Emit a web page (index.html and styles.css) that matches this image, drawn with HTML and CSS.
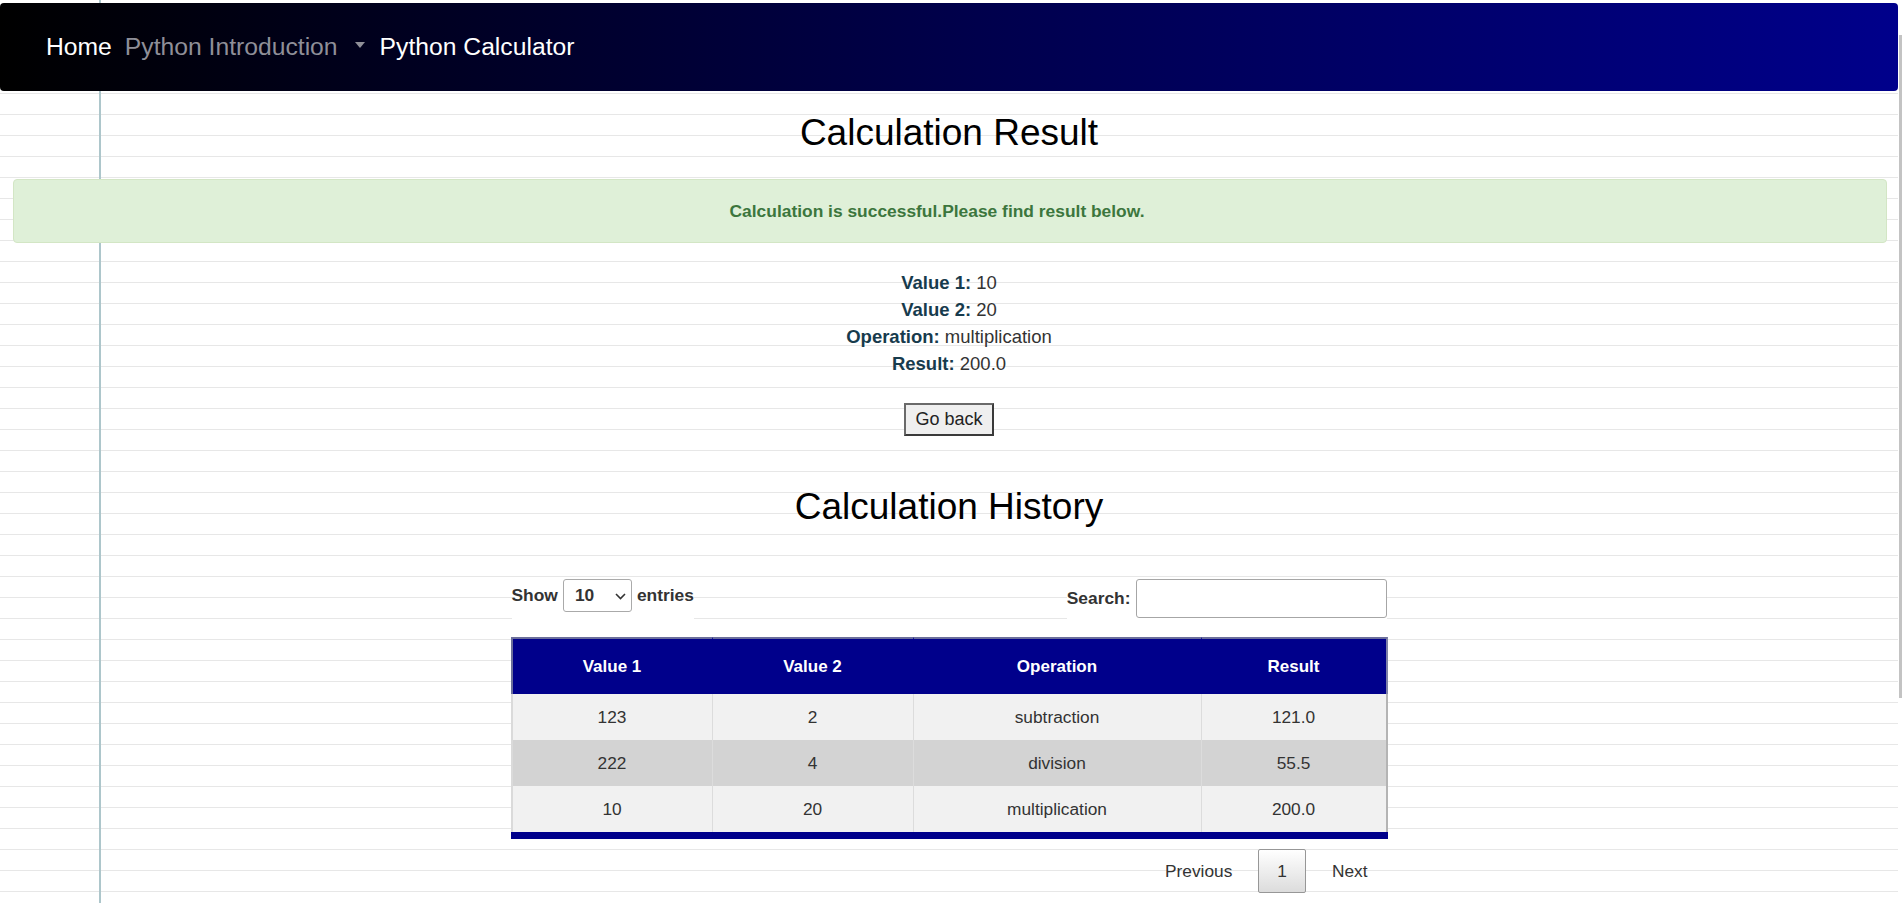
FILE: index.html
```html
<!DOCTYPE html>
<html lang="en">
<head>
<meta charset="utf-8">
<title>Python Calculator</title>
<link rel="stylesheet" href="styles.css">
</head>
<body>
<div class="page">
  <nav class="navbar">
    <a class="nav-link nav-home" href="#">Home</a>
    <span class="nav-dropdown"><a class="nav-link nav-muted" href="#">Python Introduction</a><span class="caret"></span></span>
    <a class="nav-link" href="#">Python Calculator</a>
  </nav>
  <main class="content">
    <h1 class="title">Calculation Result</h1>
    <div class="alert">Calculation is successful.Please find result below.</div>
    <div class="values">
      <div><strong>Value 1:</strong> 10</div>
      <div><strong>Value 2:</strong> 20</div>
      <div><strong>Operation:</strong> multiplication</div>
      <div><strong>Result:</strong> 200.0</div>
    </div>
    <div class="back-row"><button class="back-btn" type="button">Go back</button></div>
    <h1 class="title history-title">Calculation History</h1>
    <div class="dt-wrapper">
      <div class="dt-controls">
        <label class="dt-length"><span class="lbl">Show</span><span class="select-box"><span>10</span><svg class="chev" width="11" height="7" viewBox="0 0 11 7"><path d="M1 1 L5.5 5.5 L10 1" fill="none" stroke="#333" stroke-width="1.6"/></svg></span><span class="lbl">entries</span></label>
        <label class="dt-search"><span class="lbl-s">Search:</span><input class="search-input" type="search"></label>
      </div>
      <table class="dt-table">
        <colgroup><col class="c1"><col class="c2"><col class="c3"><col class="c4"></colgroup>
        <thead>
          <tr><th>Value 1</th><th>Value 2</th><th>Operation</th><th>Result</th></tr>
        </thead>
        <tbody>
          <tr class="odd"><td>123</td><td>2</td><td>subtraction</td><td>121.0</td></tr>
          <tr class="even"><td>222</td><td>4</td><td>division</td><td>55.5</td></tr>
          <tr class="odd"><td>10</td><td>20</td><td>multiplication</td><td>200.0</td></tr>
        </tbody>
      </table>
      <div class="pagination">
        <a class="page-btn" href="#">Previous</a>
        <a class="page-btn current" href="#">1</a>
        <a class="page-btn" href="#">Next</a>
      </div>
    </div>
  </main>
</div>
<div class="scrollbar"><div class="thumb"></div></div>
</body>
</html>
```

FILE: styles.css
```css
html, body {
  margin: 0;
  padding: 0;
}
body {
  height: 903px;
  overflow: hidden;
  display: flex;
  background: #fff;
  font-family: "Liberation Sans", Arial, sans-serif;
  color: #333;
}
*, *::before, *::after { box-sizing: border-box; }

.page {
  width: 1898px;
  flex: 0 0 1898px;
  height: 903px;
  overflow: hidden;
  background-color: #fff;
  background-image:
    linear-gradient(to right, transparent 99px, #adc6cb 99px, #adc6cb 101px, transparent 101px),
    repeating-linear-gradient(to bottom, transparent 0, transparent 9px, #e7e7e7 9px, #e7e7e7 10px, transparent 10px, transparent 21px);
}

.scrollbar {
  flex: 0 0 4px;
  width: 4px;
  background: #fff;
}
.thumb {
  margin-top: 35px;
  margin-left: 1px;
  width: 3px;
  height: 663px;
  background: #c3c3c3;
}

/* navbar */
.navbar {
  margin-top: 3px;
  height: 88px;
  border-radius: 4px;
  background: linear-gradient(to right, #000000 0%, #00004a 50%, #00008b 100%);
  display: flex;
  align-items: center;
  padding-left: 46px;
  font-size: 24.7px;
}
.nav-link {
  color: #fff;
  text-decoration: none;
  line-height: 28px;
}
.nav-home { margin-right: 13px; }
.nav-muted { color: #8f8f98; }
.nav-dropdown {
  display: flex;
  align-items: center;
  margin-right: 15px;
}
.caret {
  width: 0;
  height: 0;
  margin-left: 17px;
  margin-bottom: 4px;
  border-top: 6px solid #8f8f98;
  border-left: 5.5px solid transparent;
  border-right: 5.5px solid transparent;
}

/* content */
.title {
  margin: 21px 0 0;
  font-size: 37px;
  font-weight: normal;
  line-height: 42px;
  color: #000;
  text-align: center;
}
.alert {
  margin: 25px 11px 0 13px;
  height: 64px;
  padding: 21px 41px 21px 15px;
  border: 1px solid #d3e6c5;
  border-radius: 4px;
  background: #dff0d8;
  color: #3c763d;
  font-size: 17.4px;
  font-weight: bold;
  line-height: 20px;
  text-align: center;
}
.values {
  margin-top: 26px;
  font-size: 18.5px;
  line-height: 27px;
  text-align: center;
  color: #333;
}
.values strong { color: #173b4d; }

.back-row {
  margin-top: 26px;
  display: flex;
  justify-content: center;
}
.back-btn {
  font-family: "Liberation Sans", Arial, sans-serif;
  font-size: 18px;
  line-height: 21px;
  height: 33px;
  padding: 4px 9px;
  border: 2px solid #3a3a3a;
  border-top-color: #6a6a6a;
  border-left-color: #6a6a6a;
  background: #efefef;
  color: #222;
  border-radius: 0;
}
.history-title { margin-top: 50px; }

/* datatable */
.dt-wrapper {
  width: 877px;
  margin: 49px auto 0;
}
.dt-controls {
  display: flex;
  justify-content: space-between;
  padding: 0 1px;
  font-size: 17.4px;
  font-weight: bold;
  color: #333;
}
.dt-length, .dt-search {
  display: flex;
  align-items: flex-start;
  height: 42px;
  padding-top: 2px;
  background: #fff;
}
.dt-length .lbl { line-height: 33px; }
.select-box {
  margin: 0 5px;
  width: 69px;
  height: 33px;
  border: 1px solid #aaa;
  border-radius: 3px;
  background: #fff;
  display: flex;
  align-items: center;
  justify-content: space-between;
  padding: 0 5px 0 11px;
  line-height: 31px;
}
.chev { display: block; margin-top: 1px; }
.lbl-s { line-height: 39px; }
.search-input {
  margin-left: 5px;
  width: 251px;
  height: 39px;
  border: 1px solid #a6a6a6;
  border-radius: 3px;
  background: #fff;
  font-size: 17px;
  padding: 0 6px;
}

.dt-table {
  margin-top: 18px;
  border-spacing: 0;
  table-layout: fixed;
  width: 877px;
  border-bottom: 7px solid #00008b;
  font-size: 17.3px;
}
.c1 { width: 202px; }
.c2 { width: 201px; }
.c3 { width: 288px; }
.c4 { width: 186px; }

.dt-table th {
  height: 57px;
  padding: 0;
  background: #00008b;
  color: #fff;
  font-weight: bold;
  font-size: 17px;
  text-align: center;
  border-top: 2px solid #6b6e9b;
  border-right: 1px solid #00008b;
}
.dt-table th:first-child { border-left: 2px solid #6b6e9b; }
.dt-table th:last-child { border-right: 2px solid #7f82a8; }

.dt-table td {
  height: 46px;
  padding: 0;
  text-align: center;
  color: #333;
  border-right: 1px solid #dcdcdc;
}
.dt-table td:first-child { border-left: 2px solid #dadada; }
.dt-table td:last-child { border-right: 2px solid #b4b4b4; }
.dt-table tr.odd td { background: #f1f1f1; }
.dt-table tr.even td { background: #d3d3d3; }

.pagination {
  margin-top: 10px;
  display: flex;
  justify-content: flex-end;
  gap: 8px;
  padding-right: 2px;
  font-size: 17.3px;
}
.page-btn {
  height: 44px;
  line-height: 42px;
  padding: 0 17px;
  border: 1px solid transparent;
  border-radius: 2px;
  color: #333;
  text-decoration: none;
}
.page-btn.current {
  padding: 0 18px;
  border-color: #979797;
  background: linear-gradient(to bottom, #ffffff 0%, #dcdcdc 100%);
}
```
